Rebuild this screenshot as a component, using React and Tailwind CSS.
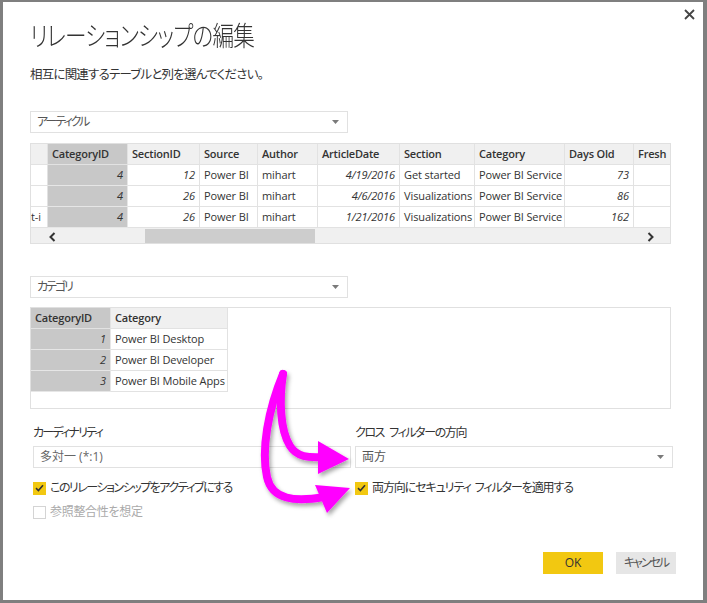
import React from "react";

const FONT = {
  fontFamily: '"Open Sans", "Noto Sans CJK JP", sans-serif',
};

function Caret() {
  return (
    <svg width="7" height="4" viewBox="0 0 7 4">
      <path d="M0 0 L7 0 L3.5 4 Z" fill="#7a7a7a" />
    </svg>
  );
}

function Dropdown({ text, className = "", textClass = "text-[#555]", caret = true }) {
  return (
    <div
      className={`h-[22px] border border-[#e1e1e1] bg-white flex items-center justify-between pl-[6px] pr-[8px] text-[12px] ${textClass} ${className}`}
    >
      <span className="[font-feature-settings:'palt'] leading-none">{text}</span>
      {caret && <Caret />}
    </div>
  );
}

const cols1 = [
  { w: 17, h: "" },
  { w: 80, h: "CategoryID", num: true, key: true },
  { w: 72, h: "SectionID", num: true },
  { w: 58, h: "Source" },
  { w: 60, h: "Author" },
  { w: 82, h: "ArticleDate", num: true },
  { w: 75, h: "Section" },
  { w: 90, h: "Category" },
  { w: 69, h: "Days Old", num: true },
  { w: 40, h: "Fresh" },
];

const rows1 = [
  ["", "4", "12", "Power BI", "mihart", "4/19/2016", "Get started", "Power BI Service", "73", ""],
  ["", "4", "26", "Power BI", "mihart", "4/6/2016", "Visualizations", "Power BI Service", "86", ""],
  ["t-i", "4", "26", "Power BI", "mihart", "1/21/2016", "Visualizations", "Power BI Service", "162", ""],
];

const cols2 = [
  { w: 80, h: "CategoryID", num: true, key: true },
  { w: 117, h: "Category" },
];
const rows2 = [
  ["1", "Power BI Desktop"],
  ["2", "Power BI Developer"],
  ["3", "Power BI Mobile Apps"],
];

function HeaderRow({ cols }) {
  return (
    <div className="flex h-[21px] shrink-0">
      {cols.map((c, i) => (
        <div
          key={i}
          style={{ width: c.w }}
          className={`shrink-0 h-full border-r border-b border-[#e2e2e2] flex items-center px-[4px] text-[11px] font-semibold tracking-[-0.2px] text-[#333] whitespace-nowrap overflow-hidden ${
            c.key ? "bg-[#c8c8c8]" : "bg-[#f0f0f0]"
          }`}
        >
          {c.h}
        </div>
      ))}
    </div>
  );
}

function DataRow({ cols, row }) {
  return (
    <div className="flex h-[21px] shrink-0">
      {cols.map((c, i) => (
        <div
          key={i}
          style={{ width: c.w }}
          className={`shrink-0 h-full border-r border-b flex items-center text-[11px] tracking-[-0.1px] text-[#333] whitespace-nowrap overflow-hidden ${
            c.key ? "bg-[#c8c8c8] border-[#e6e6e6]" : "bg-white border-[#e2e2e2]"
          } ${c.num ? "justify-end italic" : "justify-start"} ${i === 0 && !c.key ? "px-0" : "px-[4px]"}`}
        >
          {row[i]}
        </div>
      ))}
    </div>
  );
}

function Check({ on = true, disabled = false }) {
  if (disabled) {
    return <div className="w-[13px] h-[13px] border border-[#d4d4d4] bg-white shrink-0" />;
  }
  return (
    <div className="w-[13px] h-[13px] bg-[#f2c811] shrink-0 flex items-center justify-center">
      {on && (
        <svg width="9" height="8" viewBox="0 0 9 8">
          <path d="M1 4.2 L3.4 6.5 L8 1.2" fill="none" stroke="#333" strokeWidth="1.6" />
        </svg>
      )}
    </div>
  );
}

export default function App() {
  return (
    <div
      style={FONT}
      className="relative w-[707px] h-[603px] bg-white border-t-[2px] border-l-[3px] border-r-[4px] border-b-[3px] border-[#7f7f7f] overflow-hidden"
    >
      {/* close */}
      <svg className="absolute left-[681px] top-[7px]" width="11" height="11" viewBox="0 0 11 11">
        <path d="M1 1 L10 10 M10 1 L1 10" stroke="#444" strokeWidth="1.8" />
      </svg>

      <div className="flex flex-col pl-[27px] pr-[27px]">
        <div className="mt-[17px] h-[34px] flex items-center">
          <span className="text-[27px] font-light text-[#333] [font-feature-settings:'palt'] tracking-[-1px] whitespace-nowrap origin-left scale-x-[0.8]">
            リレーションシップの編集
          </span>
        </div>
        <div className="mt-[13px] h-[18px] flex items-center text-[12.5px] text-[#333] [font-feature-settings:'palt'] tracking-[-0.8px]">
          相互に関連するテーブルと列を選んでください。
        </div>

        <Dropdown text={<span className="tracking-[-2px]">アーティクル</span>} className="mt-[27px] w-[318px]" />

        <div className="mt-[10px] w-[641px] h-[101px] border border-[#e0e0e0] overflow-hidden flex flex-col">
          <HeaderRow cols={cols1} />
          {rows1.map((r, i) => (
            <DataRow key={i} cols={cols1} row={r} />
          ))}
          <div className="relative h-[17px] bg-[#f0f0f0] shrink-0">
            <svg className="absolute left-[18px] top-[4px]" width="7" height="10" viewBox="0 0 7 10">
              <path d="M5.5 1 L1.5 5 L5.5 9" fill="none" stroke="#333" strokeWidth="2" />
            </svg>
            <div className="absolute left-[114px] top-[1px] w-[170px] h-[15px] bg-[#cdcdcd]" />
            <svg className="absolute left-[616px] top-[4px]" width="7" height="10" viewBox="0 0 7 10">
              <path d="M1.5 1 L5.5 5 L1.5 9" fill="none" stroke="#333" strokeWidth="2" />
            </svg>
          </div>
        </div>

        <Dropdown text={<span className="tracking-[-2px]">カテゴリ</span>} className="mt-[32px] w-[318px]" />

        <div className="mt-[9px] w-[641px] h-[102px] border border-[#e0e0e0] overflow-hidden flex flex-col">
          <HeaderRow cols={cols2} />
          {rows2.map((r, i) => (
            <DataRow key={i} cols={cols2} row={r} />
          ))}
        </div>

        <div className="mt-[16px] pl-[3px] grid grid-cols-[318px_318px] gap-x-[4px]">
          <div className="flex flex-col">
            <div className="h-[16px] flex items-center text-[12px] text-[#333] [font-feature-settings:'palt'] tracking-[-1.8px]">
              カーディナリティ
            </div>
            <Dropdown text="多対一 (*:1)" className="mt-[5px]" textClass="text-[#666]" />
            <div className="mt-[11px] h-[18px] flex items-center gap-[4px]">
              <Check />
              <span className="text-[12px] text-[#333] [font-feature-settings:'palt'] tracking-[-1.5px]">
                このリレーションシップをアクティブにする
              </span>
            </div>
            <div className="mt-[6px] h-[18px] flex items-center gap-[4px]">
              <Check disabled />
              <span className="text-[12px] text-[#aaa] [font-feature-settings:'palt'] tracking-[-0.3px]">参照整合性を想定</span>
            </div>
          </div>
          <div className="flex flex-col">
            <div className="h-[16px] flex items-center text-[12px] text-[#333] [font-feature-settings:'palt'] tracking-[-1.4px]">
              <span>クロス</span>
              <span className="ml-[5px]">フィルターの方向</span>
            </div>
            <Dropdown text="両方" className="mt-[5px]" />
            <div className="mt-[11px] h-[18px] flex items-center gap-[4px]">
              <Check />
              <span className="text-[12px] text-[#333] [font-feature-settings:'palt'] tracking-[-1.1px]">
                両方向にセキュリティ<span className="ml-[4px]">フィルターを適用する</span>
              </span>
            </div>
          </div>
        </div>

        <div className="mt-[31px] flex justify-end gap-[13px]">
          <button className="w-[60px] h-[22px] bg-[#f2c811] text-[12px] text-[#333] flex items-center justify-center">
            OK
          </button>
          <button className="w-[60px] h-[22px] bg-[#e6e6e6] text-[12px] text-[#555] flex items-center justify-center [font-feature-settings:'palt'] tracking-[-2px]">
            キャンセル
          </button>
        </div>
      </div>

      {/* annotation arrows */}
      <svg className="absolute left-[-3px] top-[-2px] pointer-events-none" width="707" height="603" viewBox="0 0 707 603">
        <defs>
          <filter id="sh" x="-20%" y="-20%" width="140%" height="140%">
            <feDropShadow dx="2" dy="3" stdDeviation="2" floodColor="#000" floodOpacity="0.35" />
          </filter>
        </defs>
        <g filter="url(#sh)" fill="#ff00ff">
          <path
            d="M283 374 C279 400 280 430 290 446 C297 457 308 458 324 457"
            fill="none"
            stroke="#ff00ff"
            strokeWidth="8"
            strokeLinecap="round"
          />
          <path d="M318 441 L349 459 L318 474 Z" />
          <path
            d="M283 374 C268 410 261 450 267 477 C272 500 295 502 324 497"
            fill="none"
            stroke="#ff00ff"
            strokeWidth="8"
            strokeLinecap="round"
          />
          <path d="M315 485 L350 488 L327 513 Z" />
        </g>
      </svg>
    </div>
  );
}
